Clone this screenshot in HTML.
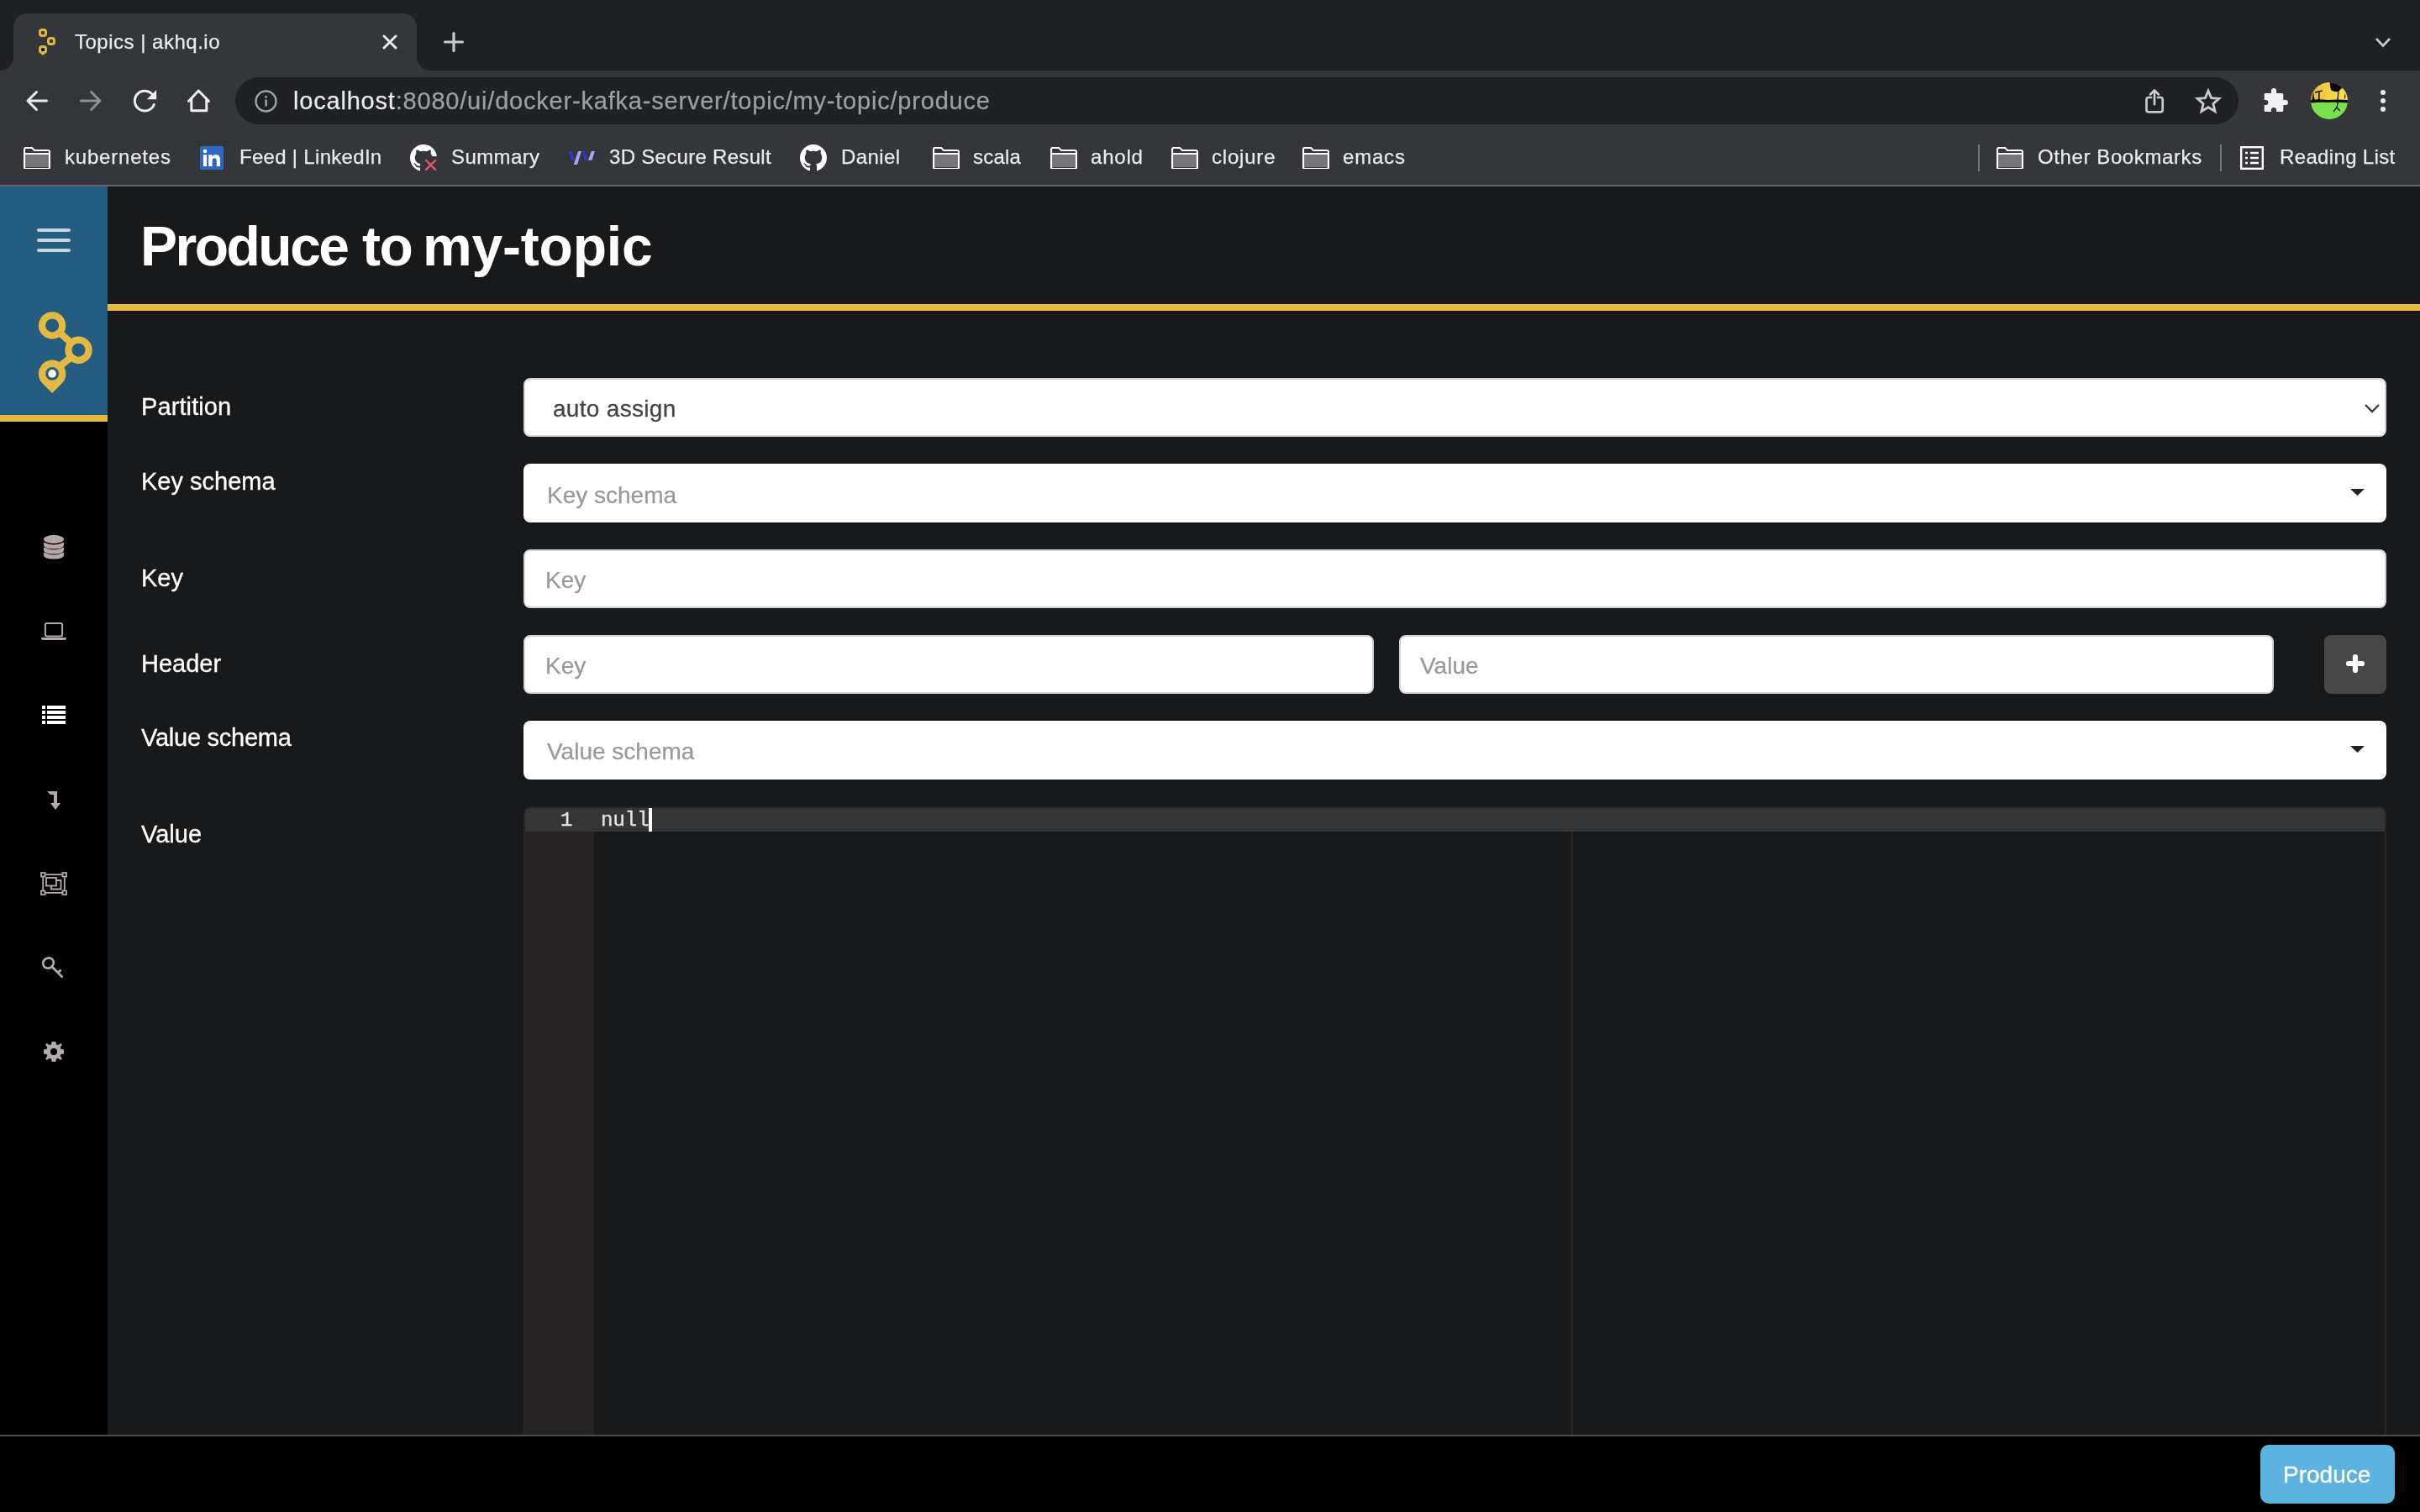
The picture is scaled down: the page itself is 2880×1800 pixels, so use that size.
<!DOCTYPE html>
<html><head><meta charset="utf-8"><title>Topics | akhq.io</title>
<style>
*{margin:0;padding:0;box-sizing:border-box}
html,body{width:2880px;height:1800px;overflow:hidden;background:#18191b;font-family:"Liberation Sans",sans-serif}
.a{position:absolute}
.t{position:absolute;white-space:nowrap;line-height:1;will-change:transform}
svg{position:absolute;overflow:visible}
.bm{font-size:24px;letter-spacing:0.8px;color:#e8eaed;-webkit-text-stroke:0.25px #e8eaed}
.lbl{font-size:29px;color:#fff;-webkit-text-stroke:0.3px #fff}
.ph{font-size:32px;color:#9a9a9a}
.inp{position:absolute;background:#fff;border:2px solid #ced4da;border-radius:8px;height:70px}
.sel{position:absolute;background:#fff;border-radius:8px;height:70px}
@media (max-width:2000px){html{width:1440px;height:900px}body{zoom:0.5}}
</style></head><body>
<!-- ============ BROWSER CHROME ============ -->
<div class="a" style="left:0;top:0;width:2880px;height:84px;background:#202124"></div>
<div class="a" style="left:0;top:84px;width:2880px;height:136px;background:#35363a"></div>
<div class="a" style="left:0;top:220px;width:2880px;height:2px;background:#646568"></div>
<!-- tab -->
<div class="a" style="left:16px;top:16px;width:480px;height:68px;background:#35363a;border-radius:16px 16px 0 0"></div>
<div class="a" style="left:0;top:68px;width:16px;height:16px;background:#35363a"><div style="width:16px;height:16px;background:#202124;border-bottom-right-radius:16px"></div></div>
<div class="a" style="left:496px;top:68px;width:16px;height:16px;background:#35363a"><div style="width:16px;height:16px;background:#202124;border-bottom-left-radius:16px"></div></div>
<!-- favicon -->
<svg style="left:45px;top:34px" width="24" height="34" viewBox="0 0 24 34">
 <g fill="none" stroke="#e0b63f" stroke-width="3"><rect x="2.5" y="1.5" width="7" height="7" rx="2.5"/><rect x="12.5" y="11.5" width="7" height="7" rx="2.5"/><rect x="2.5" y="21.5" width="7" height="7" rx="2.5"/></g><path d="M3 29 L6 32 L9 29Z" fill="#e0b63f"/><rect x="5" y="24" width="3" height="3" fill="#000"/>
</svg>
<div class="t" style="left:89px;top:38px;font-size:24px;letter-spacing:0.5px;color:#e8eaed;-webkit-text-stroke:0.25px #e8eaed">Topics | akhq.io</div>
<!-- close -->
<svg style="left:455px;top:42px" width="18" height="16" viewBox="0 0 18 16"><path d="M2 1 L16 15 M16 1 L2 15" stroke="#e8eaed" stroke-width="3" stroke-linecap="round"/></svg>
<!-- new tab plus -->
<svg style="left:528px;top:38px" width="24" height="24" viewBox="0 0 24 24"><path d="M12 1.5 V22.5 M1.5 12 H22.5" stroke="#c8cacd" stroke-width="3.2" stroke-linecap="round"/></svg>
<!-- tab strip chevron -->
<svg style="left:2827px;top:45px" width="18" height="11" viewBox="0 0 18 11"><path d="M1 1 L9 9.5 L17 1" stroke="#c8cacd" stroke-width="2.6" fill="none"/></svg>

<!-- toolbar icons -->
<svg style="left:31px;top:107px" width="26" height="26" viewBox="0 0 26 26"><path d="M24.5 13 H2.5 M12.5 2.5 L2 13 L12.5 23.5" stroke="#e8eaed" stroke-width="3" fill="none" stroke-linecap="round" stroke-linejoin="round"/></svg>
<svg style="left:95px;top:107px" width="26" height="26" viewBox="0 0 26 26"><path d="M1.5 13 H23.5 M13.5 2.5 L24 13 L13.5 23.5" stroke="#8e9093" stroke-width="3" fill="none" stroke-linecap="round" stroke-linejoin="round"/></svg>
<svg style="left:159px;top:107px" width="28" height="27" viewBox="0 0 28 27"><path d="M21.5 4.5 A11.9 11.9 0 1 0 24.3 17.5" stroke="#eeeff0" stroke-width="3" fill="none" stroke-linecap="round"/><path d="M27.2 0 V11.3 H15.8 Z" fill="#eeeff0"/></svg>
<svg style="left:223px;top:106px" width="27" height="28" viewBox="0 0 27 28"><path d="M1.5 14.5 L13.3 2 L25.5 14.5 M4.8 12 V25.8 H22.8 V12" stroke="#eeeff0" stroke-width="3" fill="none" stroke-linejoin="round" stroke-linecap="round"/></svg>
<!-- address bar -->
<div class="a" style="left:280px;top:92px;width:2384px;height:56px;background:#202124;border-radius:28px"></div>
<svg style="left:303px;top:107px" width="27" height="27" viewBox="0 0 27 27"><circle cx="13.5" cy="13.5" r="12" stroke="#9aa0a6" stroke-width="2.5" fill="none"/><rect x="12.3" y="11.5" width="2.6" height="8" fill="#9aa0a6"/><rect x="12.3" y="7" width="2.6" height="2.6" fill="#9aa0a6"/></svg>
<div class="t" style="left:349px;top:106px;font-size:29px;letter-spacing:0.8px;color:#e8eaed;-webkit-text-stroke:0.25px #e8eaed">localhost<span style="color:#9aa0a6;-webkit-text-stroke:0.25px #9aa0a6">:8080/ui/docker-kafka-server/topic/my-topic/produce</span></div>
<!-- share -->
<svg style="left:2553px;top:106px" width="23" height="29" viewBox="0 0 23 29"><path d="M7 10 H4 a2.5 2.5 0 0 0-2.5 2.5 V24.8 a2.5 2.5 0 0 0 2.5 2.5 H18.2 a2.5 2.5 0 0 0 2.5-2.5 V12.5 a2.5 2.5 0 0 0-2.5-2.5 H15 M11 18.3 V1.8 M6 6.5 L11 1.5 L16 6.5" stroke="#c8c9cb" stroke-width="2.7" fill="none" stroke-linecap="round" stroke-linejoin="round"/></svg>
<!-- star -->
<svg style="left:2613px;top:106px" width="30" height="28" viewBox="0 0 30 28"><path d="M15 2.2 L18.6 10.6 L27.8 11.4 L20.9 17.5 L23 26.5 L15 21.7 L7 26.5 L9.1 17.5 L2.2 11.4 L11.4 10.6 Z" stroke="#c8c9cb" stroke-width="2.9" fill="none" stroke-linejoin="miter"/></svg>
<!-- puzzle -->
<svg style="left:2694px;top:105px" width="30" height="29" viewBox="0 0 30 29"><defs><mask id="pz"><rect x="0.7" y="5.9" width="22.6" height="22.1" rx="1.6" fill="#fff"/><circle cx="12" cy="3.1" r="3.1" fill="#fff"/><rect x="8.9" y="3" width="6.2" height="4" fill="#fff"/><circle cx="25.9" cy="17" r="3.1" fill="#fff"/><rect x="22" y="13.9" width="4" height="6.2" fill="#fff"/><circle cx="2.3" cy="17" r="3.1" fill="#000"/><rect x="0" y="13.9" width="2.3" height="6.2" fill="#000"/><circle cx="12" cy="26" r="3.1" fill="#000"/><rect x="8.9" y="26" width="6.2" height="3" fill="#000"/></mask></defs><rect width="30" height="29" fill="#f1f1f3" mask="url(#pz)"/></svg>
<!-- avatar -->
<svg style="left:2750px;top:98px" width="44" height="44" viewBox="0 0 44 44"><defs><clipPath id="av"><circle cx="22" cy="22" r="22"/></clipPath><linearGradient id="sky" x1="0" x2="1" y1="0" y2="0"><stop offset="0" stop-color="#efb437"/><stop offset="0.5" stop-color="#f3d443"/><stop offset="1" stop-color="#f4e448"/></linearGradient></defs><g clip-path="url(#av)"><rect width="44" height="23" fill="url(#sky)"/><rect y="23" width="44" height="21" fill="#78e24c"/><path d="M0 21 Q10 19.5 20 21 Q30 20 44 21 V24.5 Q30 23.5 20 24 Q10 23.5 0 24.5Z" fill="#0a0a0a"/><path d="M22.5 0 Q23 5 24 9 Q28 12 33 11 Q35 8 38 6.5 Q42 7 44 5.5 V0Z" fill="#0a0a0a"/><path d="M32.5 9.5 L33.5 10 L32.8 22 L31.3 22Z" fill="#0a0a0a"/><path d="M32.5 23 L31 30 L28.5 33 L27 35 M31 30 L35 34" stroke="#0a0a0a" stroke-width="1.4" fill="none"/><path d="M5 12 L9.5 11 L13.5 10 M9.8 11 V21" stroke="#0a0a0a" stroke-width="1.6" fill="none"/><path d="M1.5 21 L3 11 L4.5 21Z" fill="#0a0a0a"/><path d="M40.5 21 Q42 16 41 13 Q39.5 16 40.5 21Z" fill="#0a0a0a"/></g></svg>
<!-- menu dots -->
<svg style="left:2833px;top:107px" width="6" height="26" viewBox="0 0 6 26"><circle cx="3" cy="3" r="3" fill="#e8eaed"/><circle cx="3" cy="13" r="3" fill="#e8eaed"/><circle cx="3" cy="23" r="3" fill="#e8eaed"/></svg>

<!-- bookmarks bar -->
<svg style="display:none"><defs>
 <symbol id="fold" viewBox="0 0 32 26"><rect x="2" y="9" width="28" height="15" fill="#757679"/><path d="M1 24 V3 a2 2 0 0 1 2-2 H10 L13 4 H29 a2 2 0 0 1 2 2 V24 a2 2 0 0 1-2 2 H3 a2 2 0 0 1-2-2Z M1 8 H31" stroke="#fff" stroke-width="2.2" fill="none"/></symbol>
</defs></svg>
<svg style="left:28px;top:175px" width="32" height="26"><use href="#fold"/></svg>
<div class="t bm" style="left:77px;top:175px">kubernetes</div>
<svg style="left:238px;top:174px" width="28" height="28" viewBox="0 0 28 28"><rect width="28" height="28" rx="2.5" fill="#2d67c2"/><circle cx="6" cy="6" r="2.3" fill="#fff"/><rect x="3.9" y="10.3" width="4.2" height="13.7" fill="#fff"/><path d="M10.2 10.3 H14.4 V12.2 Q16 10 19 10 Q24 10 24 16 V24 H19.8 V17.2 Q19.8 14.2 17.3 14.2 Q14.6 14.2 14.6 17.2 V24 H10.2 Z" fill="#fff"/></svg>
<div class="t bm" style="left:285px;top:175px;letter-spacing:0.3px">Feed | LinkedIn</div>
<svg style="left:488px;top:172px" width="32" height="32" viewBox="0 0 16 16"><defs><mask id="ghm"><rect width="16" height="16" fill="#fff"/><rect x="6.1" y="7.05" width="10" height="10" fill="#000"/></mask></defs><path fill="#fff" mask="url(#ghm)" d="M8 0C3.58 0 0 3.58 0 8c0 3.54 2.29 6.53 5.47 7.59.4.07.55-.17.55-.38 0-.19-.01-.82-.01-1.49-2.01.37-2.53-.49-2.69-.94-.09-.23-.48-.94-.82-1.13-.28-.15-.68-.52-.01-.53.63-.01 1.08.58 1.23.82.72 1.210 1.87.87 2.33.66.07-.52.28-.87.51-1.07-1.78-.2-3.64-.89-3.64-3.95 0-.87.31-1.59.82-2.15-.08-.2-.36-1.02.08-2.12 0 0 .67-.21 2.2.82.64-.18 1.32-.27 2-.27.68 0 1.36.09 2 .27 1.53-1.04 2.2-.82 2.2-.82.44 1.1.16 1.92.08 2.12.51.56.82 1.27.82 2.15 0 3.07-1.87 3.75-3.65 3.95.29.25.54.73.54 1.48 0 1.07-.01 1.93-.01 2.2 0 .21.15.46.55.38A8.013 8.013 0 0016 8c0-4.42-3.58-8-8-8z"/><path d="M9.2 9.1 L15.4 15.3 M15.4 9.1 L9.2 15.3" stroke="#e05a64" stroke-width="1.15"/></svg>
<div class="t bm" style="left:537px;top:175px;letter-spacing:0.4px">Summary</div>
<svg style="left:670px;top:172px" width="45" height="30" viewBox="0 0 45 30"><path d="M6.5 7.9 H10.9 L14.3 18.8 H9.9 Z" fill="#3037c0"/><path d="M17.9 7.9 H22 L17.1 24 H12.7 Z" fill="#ab9ef5"/><path d="M22.6 7.9 H26.4 L30 18.8 H25.8 Z" fill="#3037c0"/><path d="M33.7 7.9 H37.9 L34.5 18.8 H30 Z" fill="#ab9ef5"/></svg>
<div class="t bm" style="left:725px;top:175px;letter-spacing:0.3px">3D Secure Result</div>
<svg style="left:952px;top:172px" width="32" height="32" viewBox="0 0 16 16"><path fill="#fff" d="M8 0C3.58 0 0 3.58 0 8c0 3.54 2.29 6.53 5.47 7.59.4.07.55-.17.55-.38 0-.19-.01-.82-.01-1.49-2.01.37-2.53-.49-2.69-.94-.09-.23-.48-.94-.82-1.13-.28-.15-.68-.52-.01-.53.63-.01 1.08.58 1.23.82.72 1.21 1.87.87 2.33.66.07-.52.28-.87.51-1.07-1.78-.2-3.64-.89-3.64-3.95 0-.87.31-1.59.82-2.15-.08-.2-.36-1.02.08-2.12 0 0 .67-.21 2.2.82.64-.18 1.32-.27 2-.27.68 0 1.36.09 2 .27 1.53-1.04 2.2-.82 2.2-.82.44 1.1.16 1.92.08 2.12.51.56.82 1.27.82 2.15 0 3.07-1.87 3.75-3.65 3.95.29.25.54.73.54 1.48 0 1.07-.01 1.93-.01 2.2 0 .21.15.46.55.38A8.013 8.013 0 0016 8c0-4.42-3.58-8-8-8z"/></svg>
<div class="t bm" style="left:1001px;top:175px;letter-spacing:0.4px">Daniel</div>
<svg style="left:1110px;top:175px" width="32" height="26"><use href="#fold"/></svg>
<div class="t bm" style="left:1158px;top:175px;letter-spacing:0.2px">scala</div>
<svg style="left:1250px;top:175px" width="32" height="26"><use href="#fold"/></svg>
<div class="t bm" style="left:1298px;top:175px">ahold</div>
<svg style="left:1394px;top:175px" width="32" height="26"><use href="#fold"/></svg>
<div class="t bm" style="left:1442px;top:175px">clojure</div>
<svg style="left:1550px;top:175px" width="32" height="26"><use href="#fold"/></svg>
<div class="t bm" style="left:1598px;top:175px">emacs</div>
<div class="a" style="left:2354px;top:172px;width:2px;height:32px;background:#75767a"></div>
<svg style="left:2376px;top:175px" width="32" height="26"><use href="#fold"/></svg>
<div class="t bm" style="left:2425px;top:175px;letter-spacing:0.6px">Other Bookmarks</div>
<div class="a" style="left:2642px;top:172px;width:2px;height:32px;background:#75767a"></div>
<svg style="left:2666px;top:174px" width="28" height="28" viewBox="0 0 28 28"><rect x="1.2" y="1.2" width="25.6" height="25.6" stroke="#fff" stroke-width="2.4" fill="none"/><path d="M6 8 H9 M12 8 H22 M6 14 H9 M12 14 H22 M6 20 H9 M12 20 H22" stroke="#fff" stroke-width="2.6"/></svg>
<div class="t bm" style="left:2713px;top:175px;letter-spacing:0.35px">Reading List</div>

<!-- ============ APP ============ -->
<!-- sidebar -->
<div class="a" style="left:0;top:222px;width:128px;height:1486px;background:#000"></div>
<div class="a" style="left:0;top:222px;width:128px;height:272px;background:#255d80"></div>
<div class="a" style="left:0;top:494px;width:128px;height:8px;background:#e3b942"></div>


<!-- hamburger -->
<div class="a" style="left:44px;top:272px;width:40px;height:4px;background:#c5d3dd;border-radius:2px"></div>
<div class="a" style="left:44px;top:284px;width:40px;height:4px;background:#c5d3dd;border-radius:2px"></div>
<div class="a" style="left:44px;top:296px;width:40px;height:4px;background:#c5d3dd;border-radius:2px"></div>
<!-- logo -->
<svg style="left:40px;top:365px" width="80" height="110" viewBox="0 0 80 110">
 <g fill="none" stroke="#e3b942" stroke-width="8.2">
  <circle cx="22.1" cy="22.4" r="12.1"/>
  <circle cx="53.5" cy="51.7" r="12.1"/>
  <path d="M30.6 30.6 L45 43.5 M45 60 L30.6 71.5"/>
 </g>
 <path d="M22.1 63.6 A16.3 16.3 0 0 1 33.6 91.5 L22.1 103 L10.6 91.5 A16.3 16.3 0 0 1 22.1 63.6 Z M22.1 72 A7.9 7.9 0 1 0 22.1 87.8 A7.9 7.9 0 1 0 22.1 72 Z" fill="#e3b942" fill-rule="evenodd"/>
 <circle cx="22.1" cy="79.9" r="4.8" fill="#fff"/>
</svg>
<!-- sidebar icons -->
<svg style="left:52px;top:637px" width="24" height="29" viewBox="0 0 24 29" fill="#b3a9a9">
 <ellipse cx="12" cy="5" rx="12" ry="5"/>
 <path d="M0 8.5 Q12 14.5 24 8.5 V11.5 Q24 16.5 12 16.5 Q0 16.5 0 11.5Z"/>
 <path d="M0 14.5 Q12 20.5 24 14.5 V17.5 Q24 22.5 12 22.5 Q0 22.5 0 17.5Z"/>
 <path d="M0 20.5 Q12 26.5 24 20.5 V23.5 Q24 28.5 12 28.5 Q0 28.5 0 23.5Z"/>
</svg>
<svg style="left:49px;top:741px" width="30" height="21" viewBox="0 0 30 21">
 <rect x="4.9" y="1" width="20.2" height="15.6" rx="2" stroke="#b3a9a9" stroke-width="2" fill="none"/>
 <path d="M0 18 H30 V19 Q30 21 28 21 H2 Q0 21 0 19Z" fill="#b3a9a9"/>
</svg>
<svg style="left:50px;top:840px" width="28" height="22" viewBox="0 0 28 22" fill="#fff">
 <rect x="0" y="0" width="4" height="4"/><rect x="6" y="0" width="22" height="4"/>
 <rect x="0" y="6" width="4" height="4"/><rect x="6" y="6" width="22" height="4"/>
 <rect x="0" y="12" width="4" height="4"/><rect x="6" y="12" width="22" height="4"/>
 <rect x="0" y="18" width="4" height="4"/><rect x="6" y="18" width="22" height="4"/>
</svg>
<svg style="left:56px;top:942px" width="16" height="22" viewBox="0 0 16 22" fill="#b3a9a9">
 <path d="M0 0 H12 V14 H16 L10 22 L4 14 H8 V4 H4 Z"/>
</svg>
<svg style="left:48px;top:1038px" width="32" height="28" viewBox="0 0 32 28" fill="none" stroke="#b3a9a9" stroke-width="1.8">
 <rect x="1" y="1" width="4.5" height="4.5"/><rect x="26.5" y="1" width="4.5" height="4.5"/>
 <rect x="1" y="22.5" width="4.5" height="4.5"/><rect x="26.5" y="22.5" width="4.5" height="4.5"/>
 <path d="M5.5 3.2 H26.5 M5.5 24.8 H26.5 M3.2 5.5 V22.5 M28.8 5.5 V22.5"/>
 <rect x="7" y="7" width="12" height="9.5"/>
 <path d="M19 10 H24.5 V20.5 H13 V16.5"/>
</svg>
<svg style="left:50px;top:1139px" width="26" height="26" viewBox="0 0 26 26">
 <ellipse cx="7.5" cy="7.5" rx="6.5" ry="6" transform="rotate(-35 7.5 7.5)" stroke="#b3a9a9" stroke-width="2.6" fill="none"/>
 <path d="M11.5 11.5 L24.5 24.5 M19 19 L22.5 15.5" stroke="#b3a9a9" stroke-width="2.8"/>
</svg>
<svg style="left:52px;top:1240px" width="24" height="24" viewBox="-12 -12 24 24">
 <path fill="#b3a9a9" fill-rule="evenodd" d="M-2.4 -12 H2.4 L2.9 -8.7 L5.3 -7.7 L8.2 -9.9 L9.9 -8.2 L7.7 -5.3 L8.7 -2.9 L12 -2.4 V2.4 L8.7 2.9 L7.7 5.3 L9.9 8.2 L8.2 9.9 L5.3 7.7 L2.9 8.7 L2.4 12 H-2.4 L-2.9 8.7 L-5.3 7.7 L-8.2 9.9 L-9.9 8.2 L-7.7 5.3 L-8.7 2.9 L-12 2.4 V-2.4 L-8.7 -2.9 L-7.7 -5.3 L-9.9 -8.2 L-8.2 -9.9 L-5.3 -7.7 L-2.9 -8.7 Z M0 -4 A4 4 0 1 0 0 4 A4 4 0 1 0 0 -4Z"/>
</svg>

<!-- header -->
<div class="t" style="left:167px;top:260px;font-size:66px;font-weight:bold;letter-spacing:-2.5px;color:#fff">Produce</div>
<div class="t" style="left:431px;top:260px;font-size:66px;font-weight:bold;letter-spacing:-1.5px;color:#fff">to</div>
<div class="t" style="left:503px;top:260px;font-size:66px;font-weight:bold;letter-spacing:-0.2px;color:#fff">my-topic</div>
<div class="a" style="left:128px;top:362px;width:2752px;height:8px;background:#e3b942"></div>

<!-- labels -->
<div class="t lbl" style="left:168px;top:470px;letter-spacing:0.1px">Partition</div>
<div class="t lbl" style="left:168px;top:559px">Key schema</div>
<div class="t lbl" style="left:168px;top:674px">Key</div>
<div class="t lbl" style="left:168px;top:776px">Header</div>
<div class="t lbl" style="left:168px;top:864px;letter-spacing:-0.25px">Value schema</div>
<div class="t lbl" style="left:168px;top:979px">Value</div>

<!-- partition select -->
<div class="inp" style="left:623px;top:450px;width:2217px"></div>
<div class="t" style="left:658px;top:473px;font-size:28px;letter-spacing:0.3px;color:#454545;-webkit-text-stroke:0.3px #454545">auto assign</div>
<svg style="left:2814px;top:481px" width="18" height="10" viewBox="0 0 18 10"><path d="M1 1 L9 9 L17 1" stroke="#343a40" stroke-width="2.4" fill="none"/></svg>
<!-- key schema -->
<div class="sel" style="left:623px;top:552px;width:2217px"></div>
<div class="t" style="left:651px;top:576px;font-size:28px;color:#999;-webkit-text-stroke:0.25px #999">Key schema</div>
<svg style="left:2797px;top:582px" width="17" height="8" viewBox="0 0 17 8"><path d="M0 0 H17 L8.5 8Z" fill="#222"/></svg>
<!-- key -->
<div class="inp" style="left:623px;top:654px;width:2217px"></div>
<div class="t" style="left:649px;top:677px;font-size:28px;color:#999;-webkit-text-stroke:0.25px #999">Key</div>
<!-- header -->
<div class="inp" style="left:623px;top:756px;width:1012px"></div>
<div class="t" style="left:649px;top:779px;font-size:28px;color:#999;-webkit-text-stroke:0.25px #999">Key</div>
<div class="inp" style="left:1665px;top:756px;width:1041px"></div>
<div class="t" style="left:1690px;top:779px;font-size:28px;color:#999;-webkit-text-stroke:0.25px #999">Value</div>
<div class="a" style="left:2766px;top:756px;width:74px;height:70px;background:#474747;border-radius:8px"></div>
<svg style="left:2792px;top:779px" width="22" height="22" viewBox="0 0 22 22"><path d="M11 3 V19 M3 11 H19" stroke="#fff" stroke-width="6.2" stroke-linecap="round"/></svg>
<!-- value schema -->
<div class="sel" style="left:623px;top:858px;width:2217px"></div>
<div class="t" style="left:651px;top:881px;font-size:28px;color:#999;-webkit-text-stroke:0.25px #999">Value schema</div>
<svg style="left:2797px;top:888px" width="17" height="8" viewBox="0 0 17 8"><path d="M0 0 H17 L8.5 8Z" fill="#222"/></svg>

<!-- editor -->
<div class="a" style="left:623px;top:960px;width:2217px;height:760px;background:#18191b;border:2px solid #262424;border-radius:8px 8px 0 0;overflow:hidden">
  <div class="a" style="left:0;top:0;width:82px;height:760px;background:#262424"></div>
  <div class="a" style="left:1245px;top:28px;width:2px;height:740px;background:#262424"></div>
  <div class="a" style="left:0;top:0;width:2215px;height:28px;background:#343537"></div>
  <div class="t" style="left:42px;top:3px;font-family:'Liberation Mono',monospace;font-size:24px;color:#e6e1dc;-webkit-text-stroke:0.4px #e6e1dc">1</div>
  <div class="t" style="left:90px;top:3px;font-family:'Liberation Mono',monospace;font-size:24px;color:#e6e1dc;-webkit-text-stroke:0.4px #e6e1dc">null</div>
  <div class="a" style="left:147px;top:0;width:4px;height:28px;background:#fff"></div>
</div>

<!-- footer -->
<div class="a" style="left:0;top:1708px;width:2880px;height:2px;background:#4a4a4a"></div>
<div class="a" style="left:0;top:1710px;width:2880px;height:90px;background:#000"></div>
<div class="a" style="left:2690px;top:1720px;width:160px;height:70px;background:#5db3e0;border-radius:10px"></div>
<div class="t" style="left:2717px;top:1742px;font-size:28px;color:#fff;-webkit-text-stroke:0.3px #fff">Produce</div>

</body></html>
